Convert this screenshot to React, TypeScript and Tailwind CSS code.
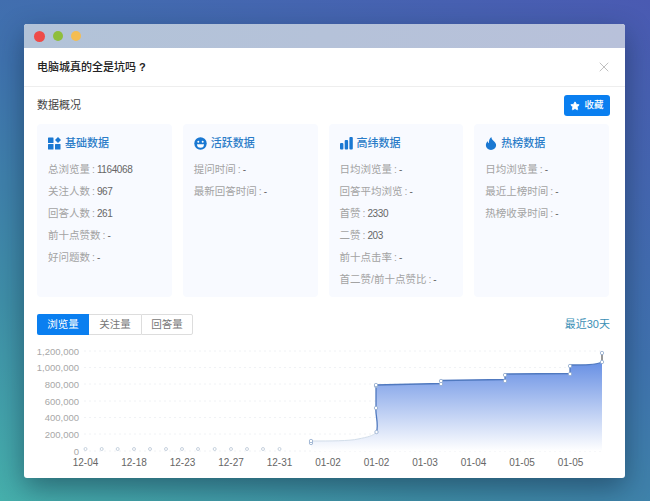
import { Star, X } from "lucide-react";
import type { ReactNode } from "react";

type Row = { label: string; value: string };

function GridIcon() {
  return (
    <svg viewBox="0 0 13 13" className="w-[13px] h-[13px] shrink-0" fill="#1a78d2">
      <rect x="0" y="0.5" width="5.5" height="5.5" rx="0.6" />
      <path d="M10 0l3 3-3 3-3-3z" />
      <rect x="0" y="7" width="5.5" height="5.5" rx="0.6" />
      <rect x="7" y="7" width="5.5" height="5.5" rx="0.6" />
    </svg>
  );
}

function SmileIcon() {
  return (
    <svg viewBox="0 0 13 13" className="w-[13px] h-[13px] shrink-0">
      <circle cx="6.5" cy="6.5" r="6.2" fill="#1a78d2" />
      <circle cx="4.3" cy="4.8" r="1" fill="#fff" />
      <circle cx="8.7" cy="4.8" r="1" fill="#fff" />
      <path d="M3 7.3h7a3.5 3.5 0 0 1-7 0z" fill="#fff" />
    </svg>
  );
}

function BarsIcon() {
  return (
    <svg viewBox="0 0 13 13" className="w-[13px] h-[13px] shrink-0" fill="#1a78d2">
      <rect x="0" y="6" width="3.4" height="6.5" rx="1" />
      <rect x="4.7" y="3" width="3.4" height="9.5" rx="1" />
      <rect x="9.4" y="0" width="3.4" height="12.5" rx="1" />
    </svg>
  );
}

function FlameIcon() {
  return (
    <svg viewBox="0 0 12 14" className="w-[12px] h-[13px] shrink-0" fill="#1a78d2">
      <path d="M6.3 0c.5 2.3 1.4 3.2 2.6 4.3 1.5 1.3 2.6 2.7 2.6 4.4 0 3-2.4 5.3-5.5 5.3S.5 11.7.5 8.7c0-1.8.8-3.2 2-4.2.1 1.1.5 1.8 1.3 2.2C3.5 4.2 4.4 1.7 6.3 0z" />
    </svg>
  );
}

function StatCard({ icon, title, rows }: { icon: ReactNode; title: string; rows: Row[] }) {
  return (
    <div className="bg-[#f8faff] rounded-[4px] h-[173px] pl-[11px] pt-[12px]">
      <div className="flex items-center gap-[4px] h-[14px] text-[11px] font-medium text-[#2a7cc8]">
        {icon}
        <span>{title}</span>
      </div>
      <div className="mt-[8px] flex flex-col">
        {rows.map((r) => (
          <div key={r.label} className="h-[22px] leading-[22px] text-[10.5px] text-[#a3a3a3] whitespace-nowrap">
            {r.label}
            <span className="mx-[2px]">:</span>
            <span className="text-[10px] tracking-[-0.4px] text-[#666]">{r.value}</span>
          </div>
        ))}
      </div>
    </div>
  );
}

const cards = [
  {
    icon: <GridIcon />,
    title: "基础数据",
    rows: [
      { label: "总浏览量", value: "1164068" },
      { label: "关注人数", value: "967" },
      { label: "回答人数", value: "261" },
      { label: "前十点赞数", value: "-" },
      { label: "好问题数", value: "-" },
    ],
  },
  {
    icon: <SmileIcon />,
    title: "活跃数据",
    rows: [
      { label: "提问时间", value: "-" },
      { label: "最新回答时间", value: "-" },
    ],
  },
  {
    icon: <BarsIcon />,
    title: "高纬数据",
    rows: [
      { label: "日均浏览量", value: "-" },
      { label: "回答平均浏览", value: "-" },
      { label: "首赞", value: "2330" },
      { label: "二赞", value: "203" },
      { label: "前十点击率", value: "-" },
      { label: "首二赞/前十点赞比", value: "-" },
    ],
  },
  {
    icon: <FlameIcon />,
    title: "热榜数据",
    rows: [
      { label: "日均浏览量", value: "-" },
      { label: "最近上榜时间", value: "-" },
      { label: "热榜收录时间", value: "-" },
    ],
  },
];

const yTicks = [
  { label: "1,200,000", y: 351 },
  { label: "1,000,000", y: 367.5 },
  { label: "800,000", y: 384 },
  { label: "600,000", y: 401 },
  { label: "400,000", y: 417.5 },
  { label: "200,000", y: 434 },
  { label: "0", y: 451 },
];

const xTicks = ["12-04", "12-18", "12-23", "12-27", "12-31", "01-02", "01-02", "01-03", "01-04", "01-05", "01-05"];
const zeroDots = [85.5, 101.7, 117.7, 134, 150, 166, 182, 198, 214.7, 231, 247, 263, 279.5];
const dots = [
  [311, 443], [311, 441], [376.5, 432], [376, 408], [376, 386], [376, 385],
  [441, 384], [441, 381], [505, 381], [505, 375], [570, 374], [570, 366], [602, 362], [602, 353],
];

const lowCurve = "M311 441 C330 441 350 441 358 439 C368 437 373 436 376.5 432";
const highCurve =
  "C379 424 375 414 376 408 L376 385 L441 383.5 L441 380.5 L505 379.5 L505 374 L570 373.5 L570 365 C585 365 595 365 602 362";

function Chart() {
  return (
    <svg viewBox="24 340 601 130" className="block w-[601px] h-[130px]" fontFamily="'Liberation Sans', sans-serif">
      <defs>
        <linearGradient id="area" x1="0" y1="0" x2="0" y2="1">
          <stop offset="0%" stopColor="#6890e4" />
          <stop offset="100%" stopColor="#ffffff" />
        </linearGradient>
      </defs>
      {yTicks.map((t) => (
        <g key={t.label}>
          <line x1="84" x2="602" y1={t.y} y2={t.y} stroke="#f0f2f5" strokeWidth="1" strokeDasharray="2 3" />
          <text x="79" y={t.y + 3.5} textAnchor="end" fontSize="9.5" fill="#a8a8a8">{t.label}</text>
        </g>
      ))}
      <path d={`${lowCurve} ${highCurve} L602 451 L311 451 Z`} fill="url(#area)" />
      <path d={lowCurve} fill="none" stroke="#d3deea" strokeWidth="1" />
      <path d={`M376.5 432 ${highCurve}`} fill="none" stroke="#5079bf" strokeWidth="1.3" />
      <line x1="602" x2="602" y1="353" y2="362" stroke="#333" strokeWidth="1" />
      {zeroDots.map((x) => (
        <circle key={x} cx={x} cy="449" r="1.5" fill="#fff" stroke="#b9c7d6" strokeWidth="0.8" />
      ))}
      {dots.map(([x, y], i) => (
        <circle key={i} cx={x} cy={y} r="1.7" fill="#fff" stroke="#8fa8cc" strokeWidth="0.8" />
      ))}
      {xTicks.map((t, i) => (
        <text key={i} x={85.5 + i * 48.5} y="465.5" textAnchor="middle" fontSize="10" fill="#666">{t}</text>
      ))}
    </svg>
  );
}

export default function App() {
  return (
    <div className="w-[650px] h-[501px] overflow-hidden pt-[24px] pl-[24px] bg-[linear-gradient(205deg,#4a5ab2_0%,#3f72ae_45%,#3f8fa8_75%,#46b0ac_100%)] font-['Liberation_Sans','Noto_Sans_CJK_SC',sans-serif]">
      <div className="w-[601px] h-[454px] bg-white rounded-[3px] overflow-hidden shadow-[0_10px_28px_rgba(10,30,50,0.45)]">
        <div className="h-[24px] flex items-center gap-[8px] pl-[10px] bg-[linear-gradient(90deg,#b2c3d8,#b8c1da)]">
          <span className="w-[11px] h-[11px] rounded-full bg-[#ee4b48]" />
          <span className="w-[10px] h-[10px] rounded-full bg-[#8fbe3c]" />
          <span className="w-[10px] h-[10px] rounded-full bg-[#f4bd52]" />
        </div>
        <div className="h-[39px] flex items-center justify-between pl-[13px] pr-[13px] border-b border-[#eeeeee]">
          <span className="text-[11px] font-medium text-[#222]">
            电脑城真的全是坑吗<span className="ml-[3px] text-[#222] font-bold">?</span>
          </span>
          <X className="w-[16px] h-[16px] text-[#b0b0b0]" strokeWidth={1.2} />
        </div>
        <div className="pl-[13px] pr-[16px] pt-[8px]">
          <div className="h-[21px] flex items-center justify-between">
            <span className="text-[11px] text-[#444]">数据概况</span>
            <button className="w-[46px] h-[21px] -mr-[1px] rounded-[3px] bg-[#0a7ff0] flex items-center justify-center gap-[4px] text-[9.5px] font-medium text-white">
              <Star className="w-[10px] h-[10px] fill-white text-white" />
              收藏
            </button>
          </div>
          <div className="mt-[8px] grid grid-cols-4 gap-[11px]">
            {cards.map((c) => (
              <StatCard key={c.title} icon={c.icon} title={c.title} rows={c.rows} />
            ))}
          </div>
          <div className="mt-[17px] h-[21px] flex items-center justify-between">
            <div className="flex text-[10.5px] text-[#777]">
              <span className="w-[52px] h-[21px] flex items-center justify-center rounded-l-[2px] bg-[#0a7ff0] text-white">浏览量</span>
              <span className="w-[52px] h-[21px] flex items-center justify-center border-y border-[#dddddd]">关注量</span>
              <span className="w-[52px] h-[21px] flex items-center justify-center border border-[#dddddd] rounded-r-[2px]">回答量</span>
            </div>
            <span className="text-[11px] text-[#3a8fb5] -mr-[1px]">最近30天</span>
          </div>
        </div>
        <div className="mt-[5px]">
          <Chart />
        </div>
      </div>
    </div>
  );
}
